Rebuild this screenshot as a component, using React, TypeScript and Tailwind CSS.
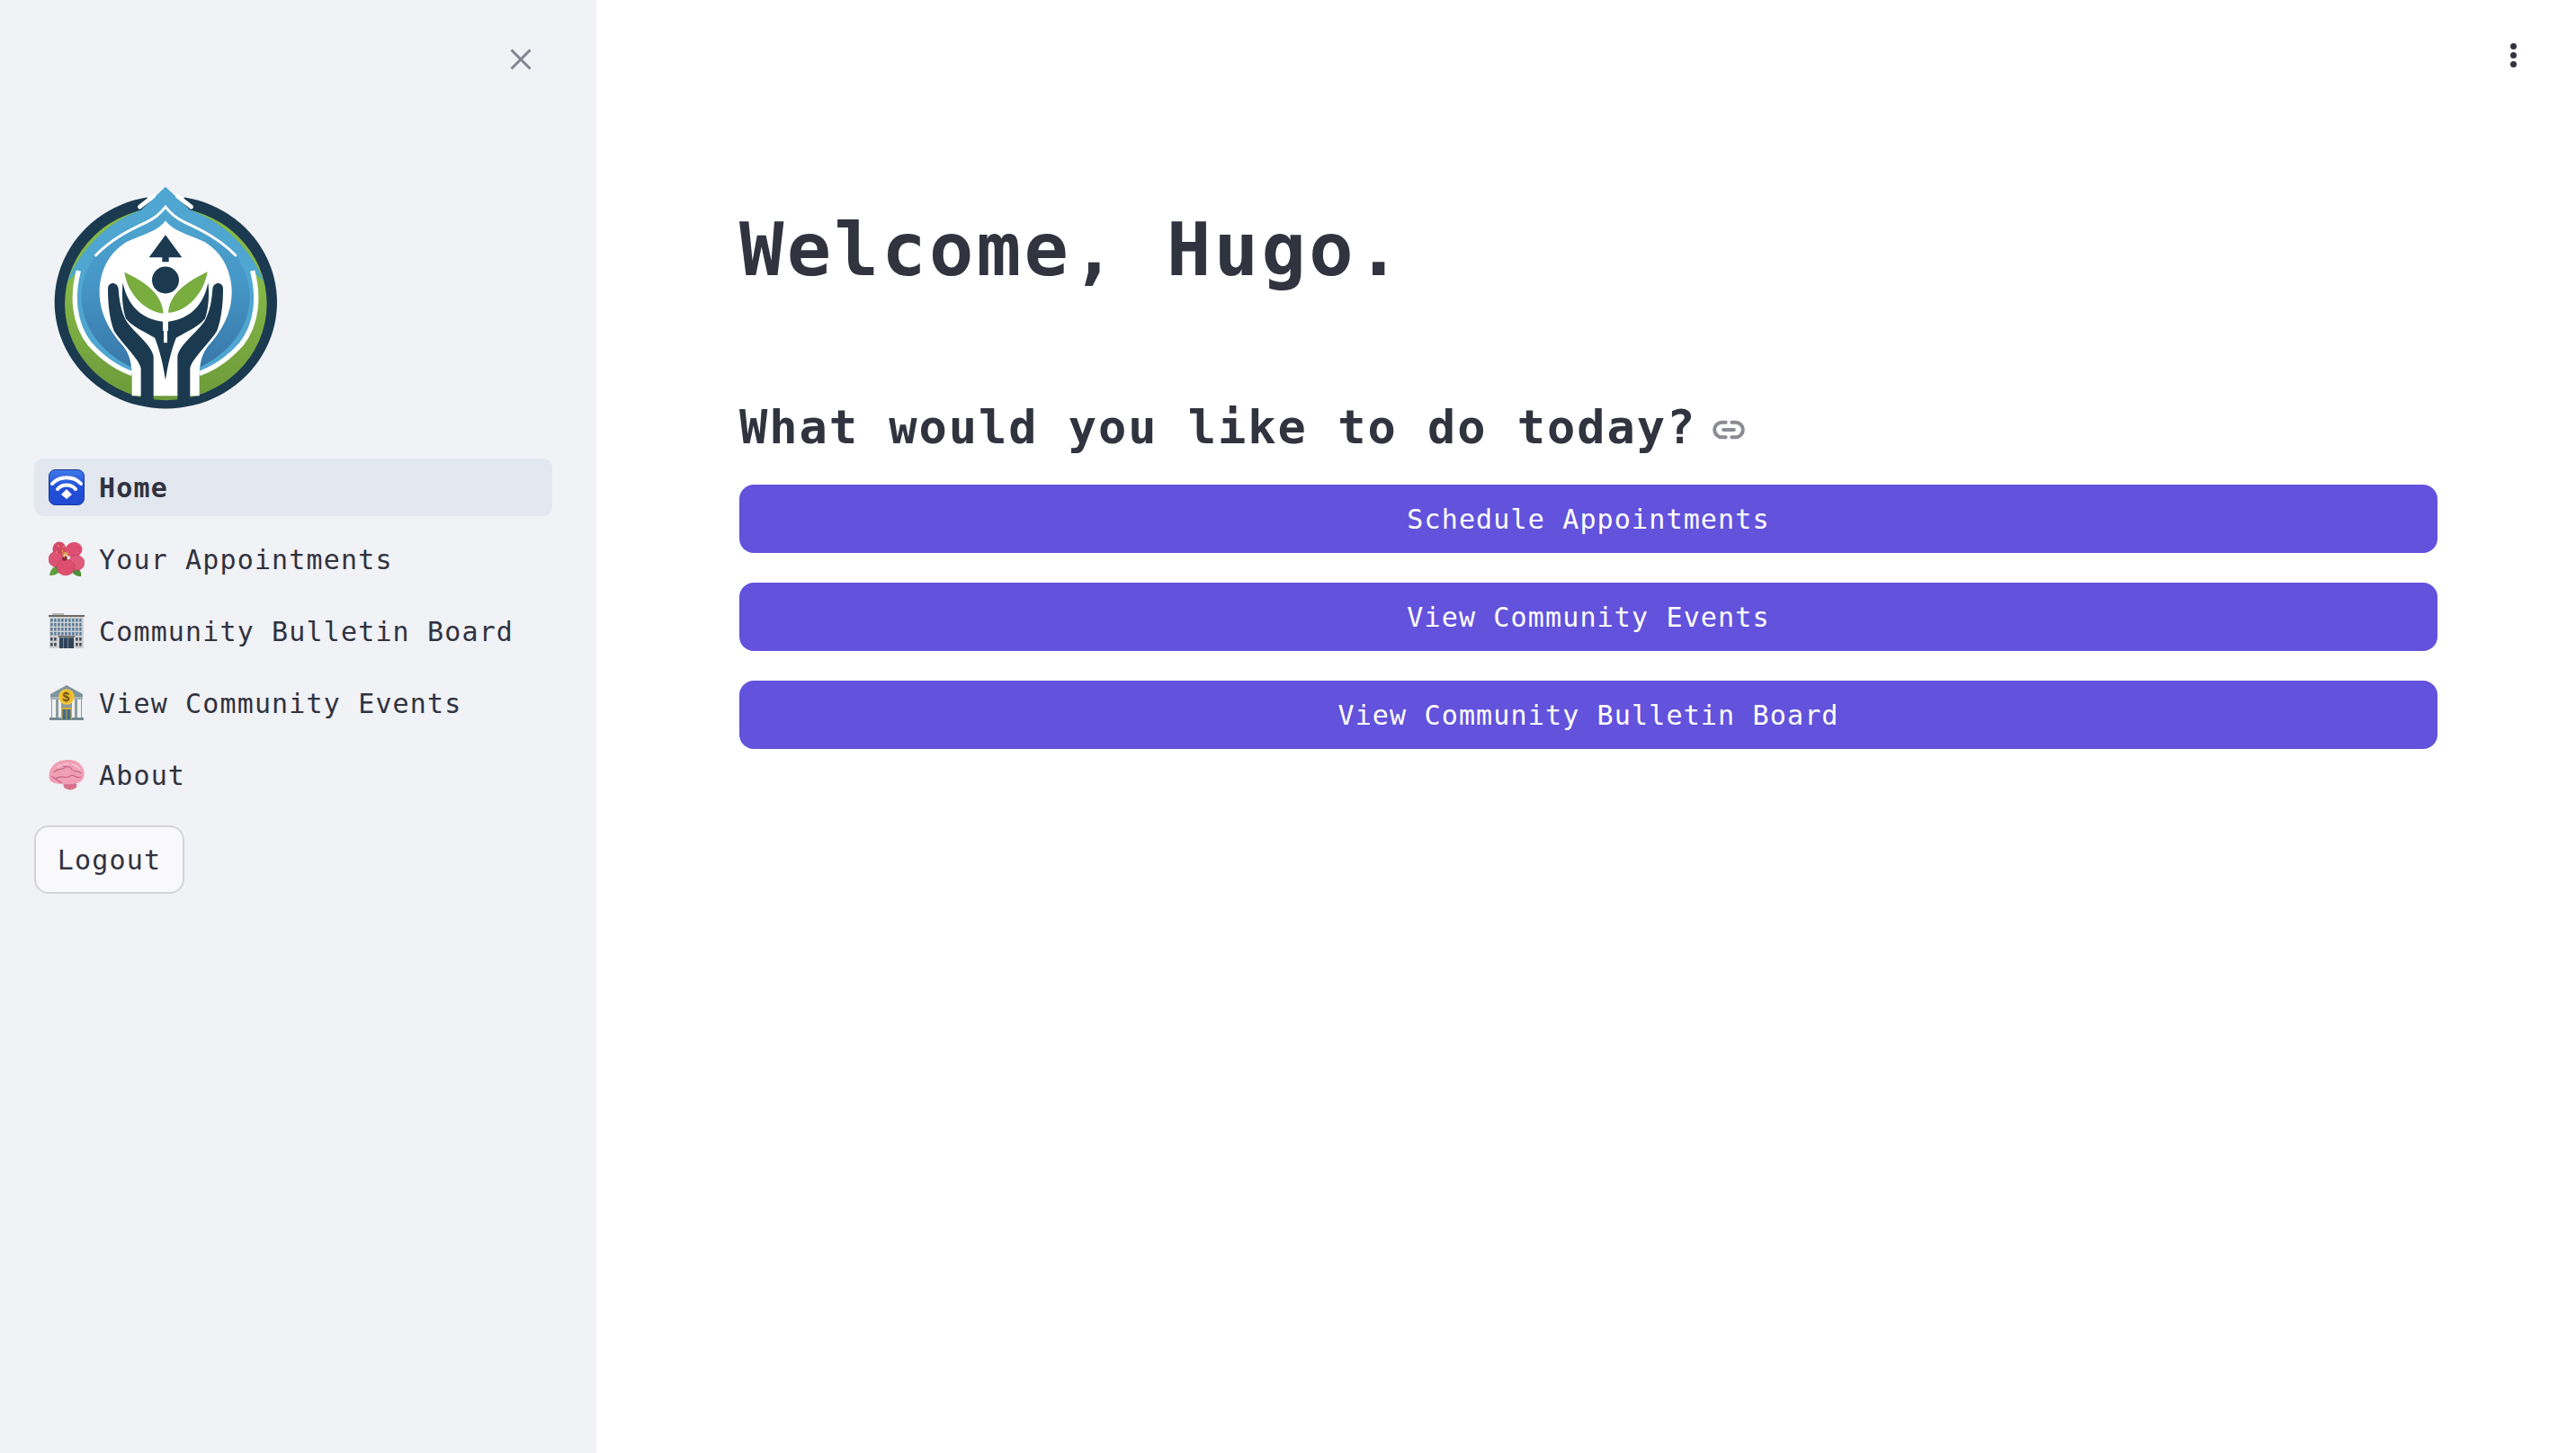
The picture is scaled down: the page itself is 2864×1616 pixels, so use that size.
const mono = "font-['DejaVu_Sans_Mono','Liberation_Mono',monospace]";

function Logo() {
  const dark = '#1b3a50';
  return (
    <svg viewBox="180 110 750 755" width="250" height="252">
      <defs>
        <linearGradient id="midBlue" x1="0" y1="0" x2="0" y2="1">
          <stop offset="0" stopColor="#4fa6d0" />
          <stop offset="0.45" stopColor="#4596c6" />
          <stop offset="1" stopColor="#3775a6" />
        </linearGradient>
        <linearGradient id="green" x1="0" y1="0" x2="0" y2="1">
          <stop offset="0.4" stopColor="#85b746" />
          <stop offset="1" stopColor="#6c9a3a" />
        </linearGradient>
      </defs>
      <g filter="blur(0.8px)">
        <path d="M490 150A371 355 0 1 0 616 150L552 210Z" fill={dark} />
        <ellipse cx="553" cy="505" rx="337" ry="322" fill="url(#green)" />
        <path d="M225 430C260 340 340 240 470 193L552 115 635 193C765 240 845 340 880 430L842 395C864 480 859 570 805 640 765 685 715 720 665 738H440C390 720 340 685 300 640 245 570 240 480 262 395Z" fill="#4fa6d0" />
        <path d="M262 395C240 480 245 570 300 640 340 685 390 720 440 738M842 395C864 480 859 570 805 640 765 685 715 720 665 738" fill="none" stroke="#fff" strokeWidth="16" />
        <path d="M552 188C520 232 450 255 380 290 300 340 260 430 275 520 290 610 360 680 438 716L445 740H660L667 716C745 680 815 610 830 520 845 430 805 340 725 290 655 255 584 232 552 188Z" fill="url(#midBlue)" />
        <path d="M552 228C525 265 470 275 420 300 365 335 335 390 332 460 330 540 370 600 410 645 430 670 437 695 440 735V812H665V735C668 695 675 670 695 645 735 600 775 540 773 460 770 390 740 335 685 300 635 275 580 265 552 228Z" fill="#fff" />
        <path d="M320 343C370 290 430 260 490 232 520 218 538 200 552 182 566 200 584 218 614 232 674 260 734 290 785 343" fill="none" stroke="#fff" strokeWidth="9" strokeLinecap="round" />
        <path d="M466 182L512 146M638 182L592 146" fill="none" stroke="#fff" strokeWidth="14" strokeLinecap="round" />
        <path d="M552 275L497 350H541V365H563V350H607Z" fill={dark} />
        <circle cx="552" cy="426" r="45" fill={dark} />
        <path d="M360 455C360 430 392 430 395 455 398 500 405 530 420 560 445 600 505 640 512 680V825H470V720C465 690 400 630 380 595 364 550 360 500 360 455Z" fill={dark} />
        <path d="M744 455C744 430 712 430 709 455 706 500 699 530 684 560 659 600 599 640 592 680V825H634V720C639 690 704 630 724 595 740 550 744 500 744 455Z" fill={dark} />
        <path d="M410 435C425 510 470 555 543 565V636C510 610 450 590 420 555 408 520 405 470 410 435Z" fill={dark} />
        <path d="M694 435C679 510 634 555 561 565V636C594 610 654 590 684 555 696 520 699 470 694 435Z" fill={dark} />
        <path d="M515 615C535 665 545 715 552 760 559 715 569 665 589 615L552 590Z" fill={dark} />
        <path d="M552 560V635" stroke="#fff" strokeWidth="12" />
        <path d="M415 400C480 430 540 470 545 538 480 530 425 470 415 400Z" fill="#79ad40" />
        <path d="M692 398C680 470 625 530 561 535 565 470 625 430 692 398Z" fill="#79ad40" />
      </g>
    </svg>
  );
}

function WifiEmoji() {
  return (
    <svg viewBox="0 0 40 40" width="40" height="40">
      <defs>
        <linearGradient id="wifiBg" x1="0" y1="0" x2="0" y2="1">
          <stop offset="0" stopColor="#3f78e8" />
          <stop offset="0.5" stopColor="#2450d8" />
          <stop offset="1" stopColor="#1f49d2" />
        </linearGradient>
      </defs>
      <rect x="0.5" y="0.5" width="39" height="39" rx="7" fill="url(#wifiBg)" stroke="#173a9c" />
      <path d="M4 16C12 7 28 7 36 16" fill="none" stroke="#fff" strokeWidth="4" strokeLinecap="round" />
      <path d="M10 22C15 16 25 16 30 22" fill="none" stroke="#fff" strokeWidth="4" strokeLinecap="round" />
      <path d="M20 22L26 28 20 33 14 28Z" fill="#fff" />
    </svg>
  );
}

function FlowerEmoji() {
  return (
    <svg viewBox="0 0 40 40" width="40" height="40">
      <path d="M1 38C2 31 6 27 11 27L14 32C10 37 6 38 1 38Z" fill="#5f9e3d" />
      <path d="M36 39C37 34 34 29 28 29L25 33C28 37 31 39 36 39Z" fill="#4f8f38" />
      <ellipse cx="12" cy="9" rx="7.5" ry="8.5" fill="#d34a68" />
      <ellipse cx="28" cy="9.5" rx="9.5" ry="8.5" fill="#dc4f73" transform="rotate(-15 28 9.5)" />
      <ellipse cx="8" cy="20" rx="8" ry="8.5" fill="#dc5373" stroke="#a92c4b" strokeWidth="0.4" />
      <ellipse cx="31" cy="24" rx="9" ry="8.5" fill="#e05a7a" stroke="#a92c4b" strokeWidth="0.4" />
      <ellipse cx="19" cy="29" rx="10" ry="9" fill="#de4f6f" stroke="#a92c4b" strokeWidth="0.4" />
      <circle cx="18" cy="19" r="2.8" fill="#8a2440" />
      <path d="M15 14L23 14M17 18L22 11M15 10L21 17" stroke="#e0ad2c" strokeWidth="1.5" strokeDasharray="1.5 1.2" />
      <circle cx="11" cy="5" r="1.5" fill="#ee6a6a" />
      <circle cx="17" cy="6" r="1.5" fill="#ee6a6a" />
      <circle cx="9" cy="12" r="1.5" fill="#ee6a6a" />
    </svg>
  );
}

function BuildingEmoji() {
  const cols = [3, 7, 11, 15, 19, 23, 27, 31, 35];
  const rows = [6, 11, 16, 21];
  return (
    <svg viewBox="0 0 40 40" width="40" height="40">
      <rect x="4" y="0" width="13" height="4" fill="#b9b5b0" />
      <rect x="1" y="3" width="38" height="36" fill="#cfd0d0" />
      <rect x="0" y="2" width="40" height="2" fill="#6f6a66" />
      {rows.map((y) =>
        cols.map((x) => <rect key={`${x}-${y}`} x={x - 0.8} y={y} width="2.4" height="3.6" fill="#55799a" />),
      )}
      {[3, 7, 31, 35].map((x) =>
        [27, 33].map((y) => <rect key={`${x}-${y}`} x={x - 0.8} y={y} width="2.4" height="3.6" fill="#3b4a5c" />),
      )}
      <rect x="11" y="25" width="18" height="2" fill="#77716c" />
      <rect x="12" y="27" width="16" height="12" fill="#2f4359" />
      <path d="M16.5 27V39M21.5 27V39M12 27H28" stroke="#8a97a3" strokeWidth="0.8" />
    </svg>
  );
}

function BankEmoji() {
  return (
    <svg viewBox="0 0 40 40" width="40" height="40">
      <path d="M20 0L38 10V13H2V10Z" fill="#7f949c" />
      <rect x="2" y="13" width="36" height="3" fill="#a7b4b9" />
      <rect x="3" y="16" width="34" height="21" fill="#8b9aa0" />
      <rect x="4" y="16" width="4" height="21" fill="#f1f3f3" />
      <rect x="11" y="16" width="3" height="21" fill="#f1f3f3" />
      <rect x="26" y="16" width="3" height="21" fill="#f1f3f3" />
      <rect x="32" y="16" width="4" height="21" fill="#f1f3f3" />
      <rect x="1" y="36" width="38" height="3" fill="#748890" />
      <rect x="14" y="25" width="12" height="13" fill="#d9aa2c" />
      <rect x="15.5" y="27" width="4" height="11" fill="#3e6b95" />
      <rect x="20.5" y="27" width="4" height="11" fill="#3e6b95" />
      <circle cx="20" cy="13" r="8.7" fill="#f5c935" />
      <circle cx="20" cy="13" r="7" fill="#eeb92c" />
      <text x="20" y="18" textAnchor="middle" fontSize="14" fontWeight="700" fontFamily="Liberation Sans" fill="#6e5310">$</text>
    </svg>
  );
}

function BrainEmoji() {
  return (
    <svg viewBox="0 0 40 34" width="40" height="34">
      <ellipse cx="24" cy="28.5" rx="7.5" ry="5" fill="#d9718d" />
      <path d="M1 21C-1 13 4 5 11 2 19-1 31-1 36 6 41 12 41 20 36 24 32 27 29 26 27 27 23 27 14 28 7 26 4 25 2 24 1 21Z" fill="#f0a0b6" />
      <path d="M6 14C10 8 14 13 19 8M14 5C17 10 23 5 26 11 28 14 33 11 36 15M8 21C13 16 19 22 24 18 28 15 31 22 36 19M4 19C8 20 9 24 14 25" fill="none" stroke="#cb6a87" strokeWidth="1.3" strokeLinecap="round" />
      <path d="M10 8C14 5 18 6 22 4M26 5C30 6 33 8 35 11" fill="none" stroke="#f9c8d4" strokeWidth="1.5" strokeLinecap="round" />
    </svg>
  );
}

const navItems = [
  { label: 'Home', icon: <WifiEmoji />, active: true },
  { label: 'Your Appointments', icon: <FlowerEmoji /> },
  { label: 'Community Bulletin Board', icon: <BuildingEmoji /> },
  { label: 'View Community Events', icon: <BankEmoji /> },
  { label: 'About', icon: <BrainEmoji /> },
];

const actions = ['Schedule Appointments', 'View Community Events', 'View Community Bulletin Board'];

export default function App() {
  return (
    <div className={`${mono} relative flex h-[1616px] bg-white text-[#31333f]`}>
      <aside className="flex w-[663px] shrink-0 flex-col bg-[#f0f2f6] px-[38px]">
        <div className="flex justify-end pt-[48px] pr-[28px]">
          <svg width="36" height="36" viewBox="0 0 24 24" fill="none" stroke="#82848f" strokeWidth="2">
            <path d="M5 5L19 19M19 5L5 19" />
          </svg>
        </div>
        <div className="mt-[122px] pl-[22px]">
          <Logo />
        </div>
        <nav className="mt-[52px] flex flex-col gap-[16px]">
          {navItems.map((item) => (
            <div
              key={item.label}
              className={`flex h-[64px] w-[576px] items-center gap-[16px] rounded-[10px] pl-[16px] text-[30px] tracking-[1.15px] ${
                item.active ? 'bg-[#e3e7ef] font-bold' : ''
              }`}
            >
              <span className="flex w-[40px] justify-center">{item.icon}</span>
              <span>{item.label}</span>
            </div>
          ))}
        </nav>
        <button className="mt-[24px] h-[76px] w-[167px] rounded-[16px] border-2 border-[#d3d4d8] bg-[#f9f9fb] text-[30px] tracking-[1.15px]">
          Logout
        </button>
      </aside>
      <main className="flex-1 pt-[224px] pr-[154px] pl-[159px]">
        <h1 className="h-[108px] text-[82px] leading-[108px] font-bold tracking-[3.4px]">Welcome, Hugo.</h1>
        <div className="mt-[107px] flex h-[72px] items-center">
          <h2 className="text-[52px] leading-[72px] font-bold tracking-[1.95px]">What would you like to do today?</h2>
          <svg className="mt-[6px] ml-[16px]" width="40" height="40" viewBox="0 0 24 24" fill="none" stroke="#8b8c93" strokeWidth="2.4" strokeLinecap="round">
            <path d="M10 7H7.5a5 5 0 0 0 0 10H10M14 7h2.5a5 5 0 0 1 0 10H14M8.5 12h7" />
          </svg>
        </div>
        <div className="mt-[28px] flex flex-col gap-[33px]">
          {actions.map((a) => (
            <button key={a} className="h-[76px] w-full rounded-[16px] bg-[#6352dc] text-[30px] tracking-[1.15px] text-white">
              {a}
            </button>
          ))}
        </div>
      </main>
      <div className="absolute top-[48px] right-[66px] flex flex-col gap-[3px]">
        <span className="h-[7px] w-[7px] rounded-full bg-[#31333f]" />
        <span className="h-[7px] w-[7px] rounded-full bg-[#31333f]" />
        <span className="h-[7px] w-[7px] rounded-full bg-[#31333f]" />
      </div>
    </div>
  );
}
